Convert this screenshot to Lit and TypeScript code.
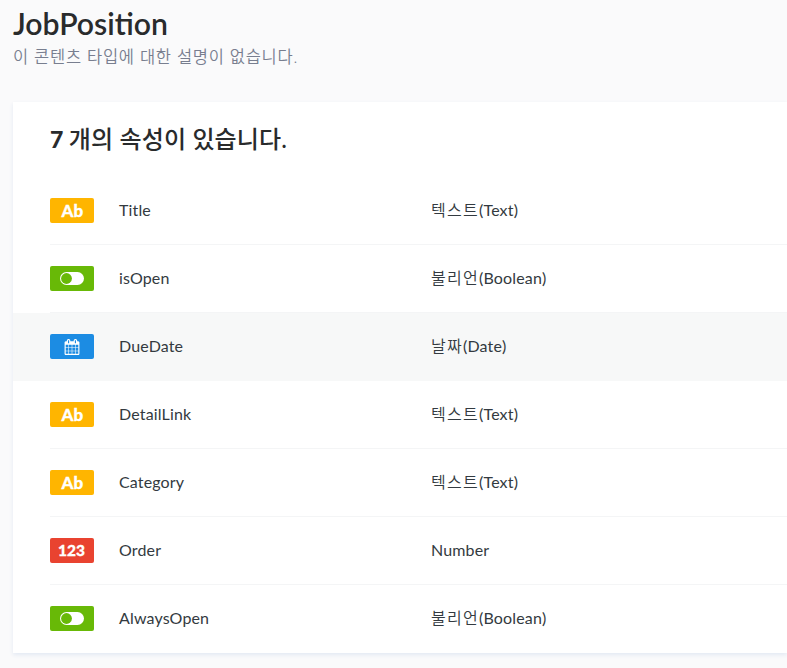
import { LitElement, html, css } from "lit";
import { customElement } from "lit/decorators.js";

type Kind = "text" | "bool" | "date" | "num";
const fields: { name: string; ko: string; type: string; kind: Kind }[] = [
  { name: "Title", ko: "텍스트", type: "(Text)", kind: "text" },
  { name: "isOpen", ko: "불리언", type: "(Boolean)", kind: "bool" },
  { name: "DueDate", ko: "날짜", type: "(Date)", kind: "date" },
  { name: "DetailLink", ko: "텍스트", type: "(Text)", kind: "text" },
  { name: "Category", ko: "텍스트", type: "(Text)", kind: "text" },
  { name: "Order", ko: "", type: "Number", kind: "num" },
  { name: "AlwaysOpen", ko: "불리언", type: "(Boolean)", kind: "bool" },
];

const icons = {
  text: html`Ab`,
  num: html`123`,
  bool: html`<svg width="24" height="13" viewBox="0 0 24 13"><rect width="24" height="13" rx="6.5" fill="#fff"/><circle cx="6.5" cy="6.5" r="5.4" fill="#68b907"/></svg>`,
  date: html`<svg width="16" height="16" viewBox="0 0 1664 1792" fill="#fff"><path d="M128 1664h288v-288H128v288zm352 0h320v-288H480v288zm-352-352h288V992H128v320zm352 0h320V992H480v320zM128 928h288V640H128v288zm736 736h320v-288H864v288zM480 928h320V640H480v288zm768 736h288v-288h-288v288zm-384-352h320V992H864v320zM512 448V160q0-13-9.500-22.500T480 128h-64q-13 0-22.500 9.500T384 160v288q0 13 9.500 22.500T416 480h64q13 0 22.500-9.500T512 448zm736 864h288V992h-288v320zM864 928h320V640H864v288zm384 0h288V640h-288v288zm32-480V160q0-13-9.500-22.500T1248 128h-64q-13 0-22.500 9.500T1152 160v288q0 13 9.500 22.500t22.500 9.500h64q13 0 22.500-9.500T1280 448zm384-64v1280q0 52-38 90t-90 38H128q-52 0-90-38t-38-90V384q0-52 38-90t90-38h128v-96q0-66 47-113T416 0h64q66 0 113 47t47 113v96h384v-96q0-66 47-113t113-47h64q66 0 113 47t47 113v96h128q52 0 90 38t38 90z"/></svg>`,
};

@customElement("app-root")
export class AppRoot extends LitElement {
  static styles = css`
    :host { display: block; height: 668px; overflow: hidden; background: #fafafb; color: #292b2c;
      font-family: Lato, "Noto Sans CJK KR", sans-serif; font-size: 16px; }
    * { box-sizing: border-box; }
    header { padding: 4px 0 0 13px; height: 102px; }
    h1 { margin: 0 0 2px; font-size: 30.2px; line-height: 38px; font-weight: 600; }
    .desc { margin: 0; line-height: 26px; color: #787e8f; font-weight: 350; font-size: 16.5px; letter-spacing: 0.72px; }
    .card { margin-left: 13px; height: 551px; background: #fff; box-shadow: 0 2px 4px #e3e9f3; }
    h2 { margin: 0; padding: 21px 0 0 37px; height: 75px; font-size: 23px; line-height: 32px; font-weight: 900; }
    h2 span { font-weight: 500; font-size: 24px; letter-spacing: 0.15px; }
    .row { display: flex; align-items: center; height: 68px; padding-left: 37px; }
    .line { flex: 1; display: flex; align-items: center; height: 68px; border-bottom: 1px solid #f4f5f6; }
    .row:last-child .line { border-color: transparent; }
    .active { background: #f7f8f8; }
    .active .line { border-color: transparent; }
    .badge { width: 44px; height: 25px; border-radius: 2px; display: flex; align-items: center; justify-content: center;
      color: #fff; font-size: 17px; font-weight: 900; line-height: 25px; }
    .text { background: #ffb500; -webkit-text-stroke: 0.3px #fff; letter-spacing: 0.3px; padding-left: 1px; }
    .bool { background: #68b907; }
    .date { background: #1c8ce3; }
    .num { background: #e94330; font-size: 15.5px; -webkit-text-stroke: 0.3px #fff; padding-right: 1px; }
    .name, .type { line-height: 24px; margin-bottom: 2px; color: #333a40; letter-spacing: 0.15px; }
    .name { margin-left: 25px; width: 312px; }
    .ko { font-weight: 350; font-size: 16px; letter-spacing: 1.3px; }
  `;
  render() {
    return html`
      <header><h1>JobPosition</h1><p class="desc">이 콘텐츠 타입에 대한 설명이 없습니다.</p></header>
      <section class="card">
        <h2>7 <span>개의 속성이 있습니다.</span></h2>
        ${fields.map((f) => html`<div class="row ${f.kind === "date" ? "active" : ""}"><div class="line">
          <span class="badge ${f.kind}">${icons[f.kind]}</span><span class="name">${f.name}</span><span class="type">${f.ko ? html`<span class="ko">${f.ko}</span>` : ""}${f.type}</span>
        </div></div>`)}
      </section>`;
  }
}
